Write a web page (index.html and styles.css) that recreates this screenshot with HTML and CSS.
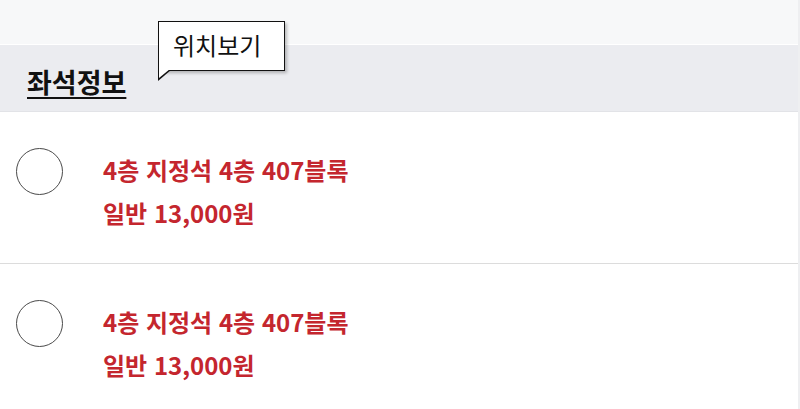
FILE: index.html
```html
<!DOCTYPE html>
<html lang="ko">
<head>
<meta charset="utf-8">
<link rel="stylesheet" href="styles.css">
</head>
<body>
<div class="page">
  <div class="topbar"></div>
  <div class="section-head">
    <h2 class="section-title">좌석정보</h2>
    <div class="tooltip">위치보기</div>
  </div>
  <ul class="seat-list">
    <li class="seat-row">
      <span class="radio"></span>
      <div class="seat-info">
        <div class="seat-name">4층 지정석 4층 407블록</div>
        <div class="seat-price">일반 13,000원</div>
      </div>
    </li>
    <li class="seat-row">
      <span class="radio"></span>
      <div class="seat-info">
        <div class="seat-name">4층 지정석 4층 407블록</div>
        <div class="seat-price">일반 13,000원</div>
      </div>
    </li>
  </ul>
</div>
</body>
</html>
```
FILE: styles.css
```css
* { box-sizing: border-box; }
html, body { margin: 0; padding: 0; }
body {
  font-family: "Noto Sans CJK KR", "Noto Sans", sans-serif;
  background: #ffffff;
  width: 800px;
  height: 409px;
  overflow: hidden;
}
.page {
  width: 800px;
  border-right: 2px solid #eeeff1;
  min-height: 409px;
}
.topbar {
  height: 45px;
  background: #f7f8f9;
  border-bottom: 1px solid #ffffff;
}
.section-head {
  position: relative;
  height: 67px;
  background: #ebecf0;
  display: flex;
  align-items: center;
  padding-left: 27px;
  border-bottom: 1px solid #e2e3e7;
}
.section-title {
  margin: 0;
  padding-top: 6px;
  font-size: 27px;
  font-weight: 700;
  color: #111111;
  text-decoration: underline;
  text-decoration-thickness: 2px;
  text-underline-offset: 4px;
  line-height: 1;
}
.tooltip {
  position: absolute;
  left: 158px;
  top: -24px;
  width: 127px;
  height: 50px;
  background: #ffffff;
  border: 1px solid #111111;
  box-shadow: 2px 2px 3px rgba(0,0,0,0.25);
  font-size: 24px;
  line-height: 46px;
  padding-left: 14px;
  color: #111111;
}
.tooltip::before {
  content: "";
  position: absolute;
  left: -1px;
  top: 48px;
  width: 0;
  height: 0;
  border-left: 13px solid #111111;
  border-bottom: 11px solid transparent;
}
.tooltip::after {
  content: "";
  position: absolute;
  left: 0;
  top: 47px;
  width: 0;
  height: 0;
  border-left: 11px solid #ffffff;
  border-bottom: 9px solid transparent;
}
.seat-list {
  list-style: none;
  margin: 0;
  padding: 0;
}
.seat-row {
  display: flex;
  align-items: flex-start;
  gap: 40px;
  padding: 36px 0 29px 16px;
  border-bottom: 1px solid #dcdcdc;
}
.radio {
  flex: none;
  width: 47px;
  height: 47px;
  border: 1.5px solid #4a4a4a;
  border-radius: 50%;
  background: #fff;
}
.seat-info {
  color: #c4262e;
  font-weight: 700;
  font-size: 24px;
  line-height: 43px;
}
```
